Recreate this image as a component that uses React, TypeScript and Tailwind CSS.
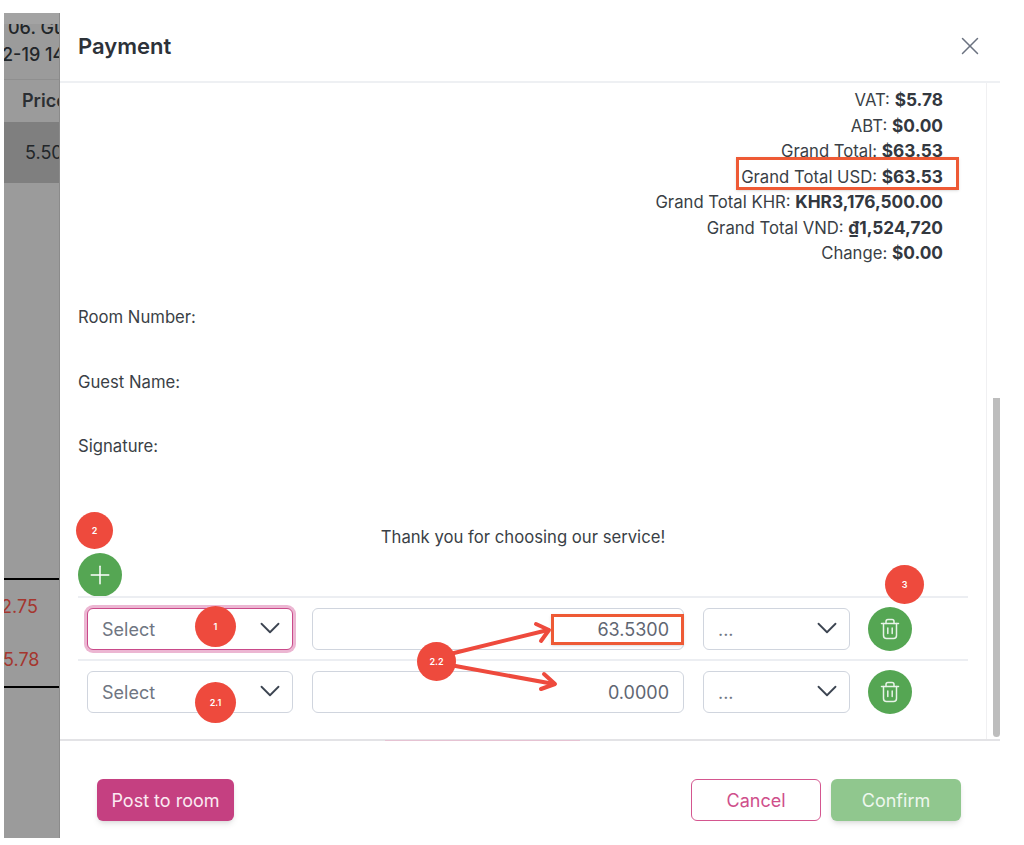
import { ChevronDown, Plus, X } from "lucide-react";

const totals = [
  { label: "VAT:", value: "$5.78" },
  { label: "ABT:", value: "$0.00" },
  { label: "Grand Total:", value: "$63.53" },
  { label: "Grand Total USD:", value: "$63.53" },
  { label: "Grand Total KHR:", value: "KHR3,176,500.00" },
  { label: "Grand Total VND:", value: "₫1,524,720" },
  { label: "Change:", value: "$0.00" },
];

function TrashIcon() {
  return (
    <svg width="24" height="24" viewBox="0 0 24 24" fill="none" stroke="#e8f3e8" strokeWidth="1.5" strokeLinecap="round" strokeLinejoin="round">
      <path d="M3.5 6.5h17" />
      <path d="M8 6.5V4.5a2 2 0 0 1 2-2h4a2 2 0 0 1 2 2v2" />
      <path d="M5.5 6.5v12a3 3 0 0 0 3 3h7a3 3 0 0 0 3-3v-12" />
      <path d="M9.8 11v5.5" />
      <path d="M14.2 11v5.5" />
    </svg>
  );
}

function SelectBox({ label, width, focused }: { label: string; width: string; focused?: boolean }) {
  return (
    <div
      className={`${width} h-[42px] shrink-0 flex items-center justify-between rounded-md bg-white pl-[14px] pr-[5px] text-[18px] border ${
        focused ? "border-[#c94a8a] ring-[3px] ring-[#ecb6d2]" : "border-[#d0d5de]"
      }`}
    >
      <span className="text-[#6f7682] pt-[2px]">{label}</span>
      <ChevronDown size={34} strokeWidth={1.3} className="text-[#3d4552] -mt-[2px]" />
    </div>
  );
}

function PaymentRow({ amount, focused }: { amount: string; focused?: boolean }) {
  return (
    <div className="flex items-center h-[63px] border-t-2 border-[#eceef2] pl-[9px] pt-[1px]">
      <SelectBox label="Select" width="w-[206px]" focused={focused} />
      <div className="ml-[19px] w-[372px] h-[42px] flex items-center justify-end rounded-md border border-[#d0d5de] pr-[14px] pt-[2px] text-[18px] text-[#5f6672]">
        {amount}
      </div>
      <div className="ml-[19px]">
        <SelectBox label="..." width="w-[147px]" />
      </div>
      <button className="ml-[18px] w-[44px] h-[44px] rounded-full bg-[#55a653] flex items-center justify-center">
        <TrashIcon />
      </button>
    </div>
  );
}

function Marker({ label, className }: { label: string; className: string }) {
  return (
    <div className={`absolute rounded-full bg-[#ee4a3d] text-white font-semibold text-[9px] flex items-center justify-center ${className}`}>
      {label}
    </div>
  );
}

function BackdropStrip() {
  return (
    <div className="w-[56px] shrink-0 h-full overflow-hidden bg-[#9b9b9b] text-[#222629] text-[18px] whitespace-nowrap border-r border-[#8b8b8b]">
      <div className="h-[11px] bg-[#a3a3a3]" />
      <div className="h-[56px] overflow-hidden border-b border-[#8f8f8f] font-medium leading-[27px]">
        <div className="-mt-[10px] pl-[4px]">06. Guest</div>
        <div className="-ml-[2px]">2-19 14:20</div>
      </div>
      <div className="h-[42px] flex items-center pl-[18px] font-semibold text-[#2b2f33]">Price</div>
      <div className="h-[61px] bg-[#7f7f7f] flex items-center pl-[21px]">5.50</div>
      <div className="h-[395px]" />
      <div className="h-[2px] bg-black" />
      <div className="h-[53px] flex items-center text-[#a5362e]">
        <span className="-ml-[3px]">2.75</span>
      </div>
      <div className="h-[53px] flex items-center text-[#a5362e]">
        <span className="-ml-[1px]">5.78</span>
      </div>
      <div className="h-[2px] bg-black" />
    </div>
  );
}

export default function App() {
  return (
    <div
      className="relative w-[1024px] h-[845px] overflow-hidden bg-white text-[16.7px] leading-[25.6px] text-[#3a3f46]"
      style={{ fontFamily: "Inter, 'Noto Sans', sans-serif" }}
    >
      <div className="flex h-full pt-[13px] pb-[7px] pl-[4px]">
        <BackdropStrip />
        <div className="w-[940px] flex flex-col">
          <div className="h-[70px] shrink-0 flex items-center justify-between pl-[18px] pr-[15px] border-b-2 border-[#eef0f3]">
            <h2 className="font-semibold text-[22px] text-[#2d3239]">Payment</h2>
            <X size={30} strokeWidth={1.2} className="text-[#6b7280] -mt-[3px]" />
          </div>

          <div className="h-[658px] shrink-0 flex border-b-2 border-[#e3e3e6]">
            <div className="w-[927px] shrink-0 border-r border-[#f0f0f2] pl-[18px] pr-[18px] pt-[4px]">
              <div className="pr-[25px] text-right">
                {totals.map((t) => (
                  <div key={t.label} className="h-[25.5px]">
                    {t.label} <span className="font-bold text-[17.3px] text-[#33383f]">{t.value}</span>
                  </div>
                ))}
              </div>
              <div className="mt-[39.7px] h-[64.5px]">Room Number:</div>
              <div className="h-[64.5px]">Guest Name:</div>
              <div className="h-[91px]">Signature:</div>
              <div className="text-center h-[17px]">Thank you for choosing our service!</div>
              <div className="h-[43px] w-[44px] mt-[11px]">
                <button className="w-[44px] h-[44px] rounded-full bg-[#55a653] flex items-center justify-center text-white">
                  <Plus size={30} strokeWidth={1.2} />
                </button>
              </div>
              <PaymentRow amount="63.5300" focused />
              <PaymentRow amount="0.0000" />
            </div>
            <div className="flex-1 flex justify-end pt-[315px] pb-[2px]">
              <div className="w-[7px] h-full rounded-b bg-[#bdbdbd]" />
            </div>
          </div>

          <div className="flex-1 flex items-start justify-between pl-[37px] pr-[39px] pt-[38px] text-[18px]">
            <button className="w-[137px] h-[42px] pt-[2px] rounded-md bg-[#c54081] text-[#fbeaf2] shadow-md">Post to room</button>
            <div className="flex gap-[10px]">
              <button className="w-[130px] h-[42px] pt-[2px] rounded-md border border-[#d4568f] text-[#cf4f8b] bg-white">Cancel</button>
              <button className="w-[130px] h-[42px] pt-[2px] rounded-md bg-[#90c78e] text-[#eef7ee] shadow-md">Confirm</button>
            </div>
          </div>
        </div>
      </div>

      {/* Annotations drawn on top of the screenshot */}
      <div className="absolute left-[385px] top-[740px] w-[195px] h-[1px] bg-[#e6c3d3]" />
      <div className="absolute left-[736px] top-[157px] w-[223px] h-[33px] border-[3px] border-[#ee5a35] shadow-sm" />
      <div className="absolute left-[551px] top-[614px] w-[133px] h-[31px] border-[3px] border-[#ee5a35] shadow-sm" />
      <svg className="absolute left-0 top-0 pointer-events-none" width="1024" height="845" fill="none" stroke="#ee4a3d" strokeWidth="4" strokeLinecap="round" strokeLinejoin="round">
        <path d="M450 654 L548 630" />
        <path d="M536 624 L549 630 L541 641" />
        <path d="M450 665 L554 684" />
        <path d="M544 674 L555 684 L541 689" />
      </svg>
      <Marker label="2" className="left-[76px] top-[512px] w-[37px] h-[37px]" />
      <Marker label="1" className="left-[195px] top-[606px] w-[41px] h-[41px]" />
      <Marker label="2.1" className="left-[195px] top-[682px] w-[41px] h-[41px]" />
      <Marker label="2.2" className="left-[417px] top-[642px] w-[39px] h-[39px]" />
      <Marker label="3" className="left-[885px] top-[565px] w-[39px] h-[39px]" />
    </div>
  );
}
